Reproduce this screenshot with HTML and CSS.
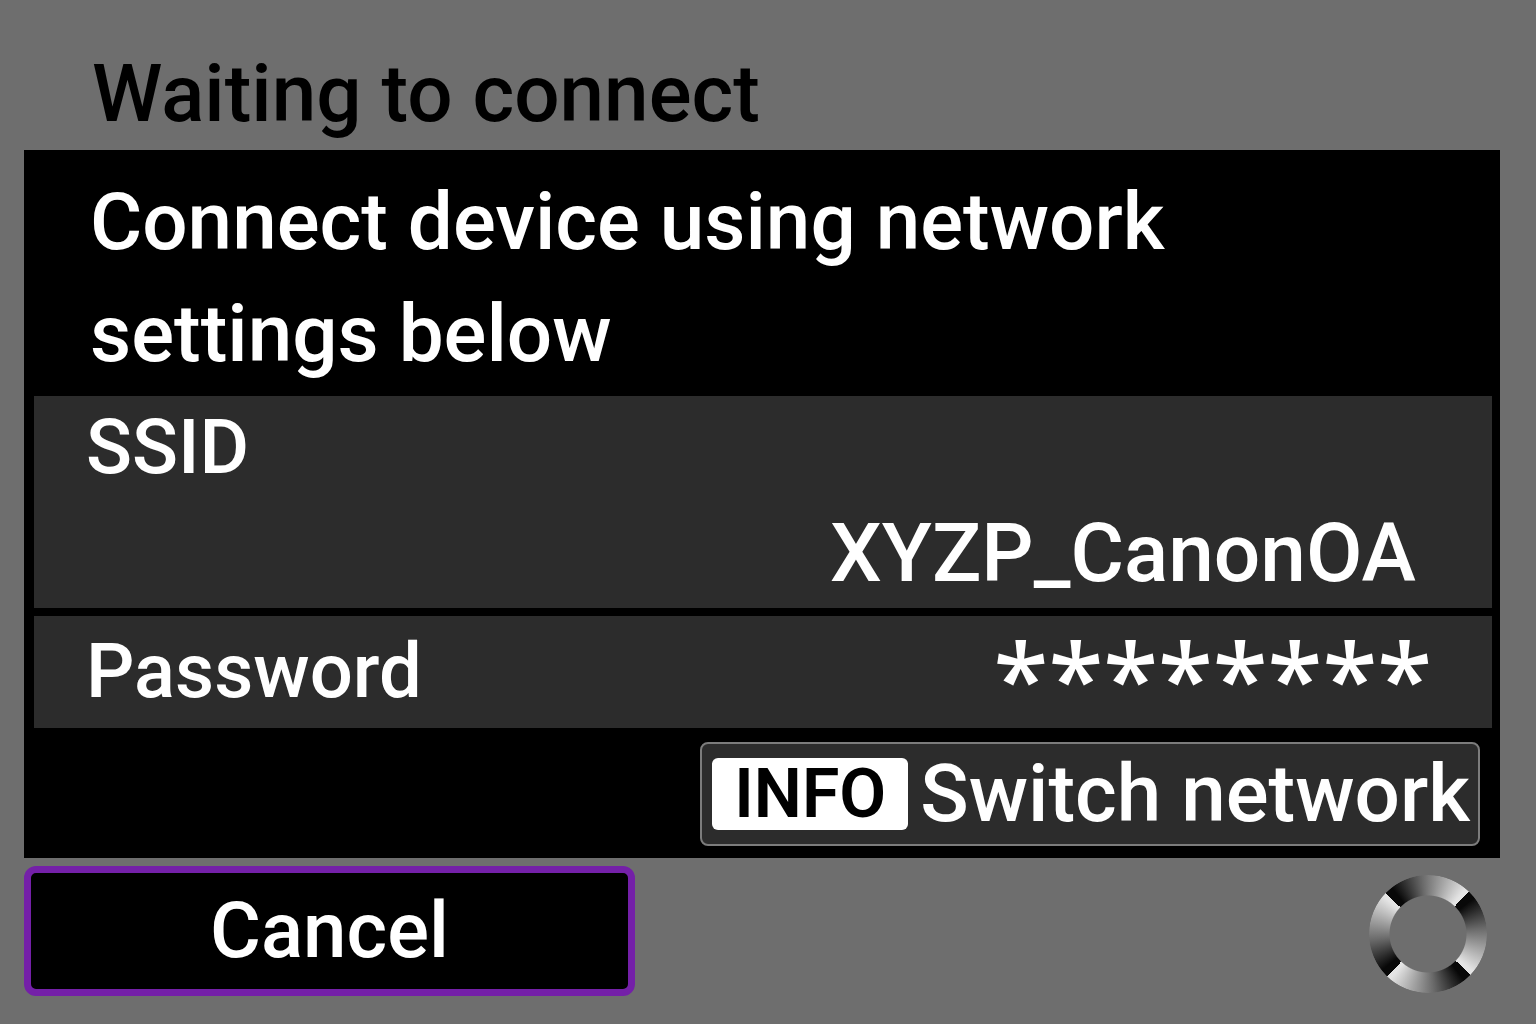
FILE: index.html
```html
<!DOCTYPE html>
<html lang="en">
<head>
<meta charset="utf-8">
<title>Waiting to connect</title>
<link rel="stylesheet" href="styles.css">
</head>
<body>
<main class="screen">
  <h1 class="title">Waiting to connect</h1>
  <section class="panel">
    <p class="message">Connect device using network settings below</p>
    <dl class="settings">
      <div class="row row-ssid"><dt>SSID</dt><dd>XYZP_CanonOA</dd></div>
      <div class="row row-password"><dt>Password</dt><dd class="stars">********</dd></div>
    </dl>
    <button class="switch" type="button"><span class="key">INFO</span><span>Switch network</span></button>
  </section>
  <footer class="footer">
    <button class="cancel" type="button">Cancel</button>
    <div class="spinner" role="status" aria-label="Connecting"></div>
  </footer>
</main>
</body>
</html>
```
FILE: styles.css
```css
* { box-sizing: border-box; }
body {
  margin: 0;
  background: #6e6e6e;
  color: #fff;
  font: 500 80px/112px Roboto, sans-serif;
}
h1, p, dl, dd { margin: 0; font-weight: inherit; }
button { font: inherit; color: inherit; padding: 0; }
.screen {
  display: flex;
  flex-direction: column;
  min-height: 100vh;
  padding: 38px 36px 28px 24px;
}
.title { padding-left: 68px; color: #000; font-size: 80px; }
.panel {
  display: flex;
  flex-direction: column;
  background: #000;
  padding: 16px 8px 12px 10px;
}
.message { max-width: 1180px; padding-left: 56px; margin-bottom: 6px; }
.settings { display: grid; gap: 8px; }
.row { background: #2c2c2c; padding: 0 76px 0 52px; }
.row dt { font-size: 76px; }
.row-ssid dt { line-height: 102px; }
.row-ssid dd { font-size: 82px; line-height: 110px; text-align: right; }
.row-password { display: flex; justify-content: space-between; height: 112px; padding-right: 60px; }
.row-password dt { line-height: 110px; }
.row-password .stars { font-family: "Noto Sans", sans-serif; font-size: 100px; line-height: 122px; }
.switch {
  display: flex;
  align-items: center;
  align-self: flex-end;
  gap: 12px;
  height: 104px;
  margin: 14px 12px 0 0;
  padding: 0 8px 0 10px;
  border: 2px solid #7c7c7c;
  border-radius: 8px;
  background: #2c2c2c;
}
.key {
  width: 196px;
  border-radius: 6px;
  background: #fff;
  color: #000;
  font-size: 68px;
  font-weight: 600;
  line-height: 72px;
}
.footer {
  display: flex;
  align-items: center;
  justify-content: space-between;
  padding: 8px 13px 0 0;
}
.cancel {
  width: 611px;
  height: 130px;
  border: 7px solid #7420a8;
  border-radius: 12px;
  background: #000;
  font-size: 78px;
}
.spinner {
  width: 118px;
  height: 118px;
  margin-top: 6px;
  border-radius: 50%;
  background: repeating-conic-gradient(from -46deg, #080808 0deg 8deg, #6a6a6a 40deg, #e4e4e4 86deg 90deg);
  mask: radial-gradient(circle, transparent 38px, #000 39px);
}
```
